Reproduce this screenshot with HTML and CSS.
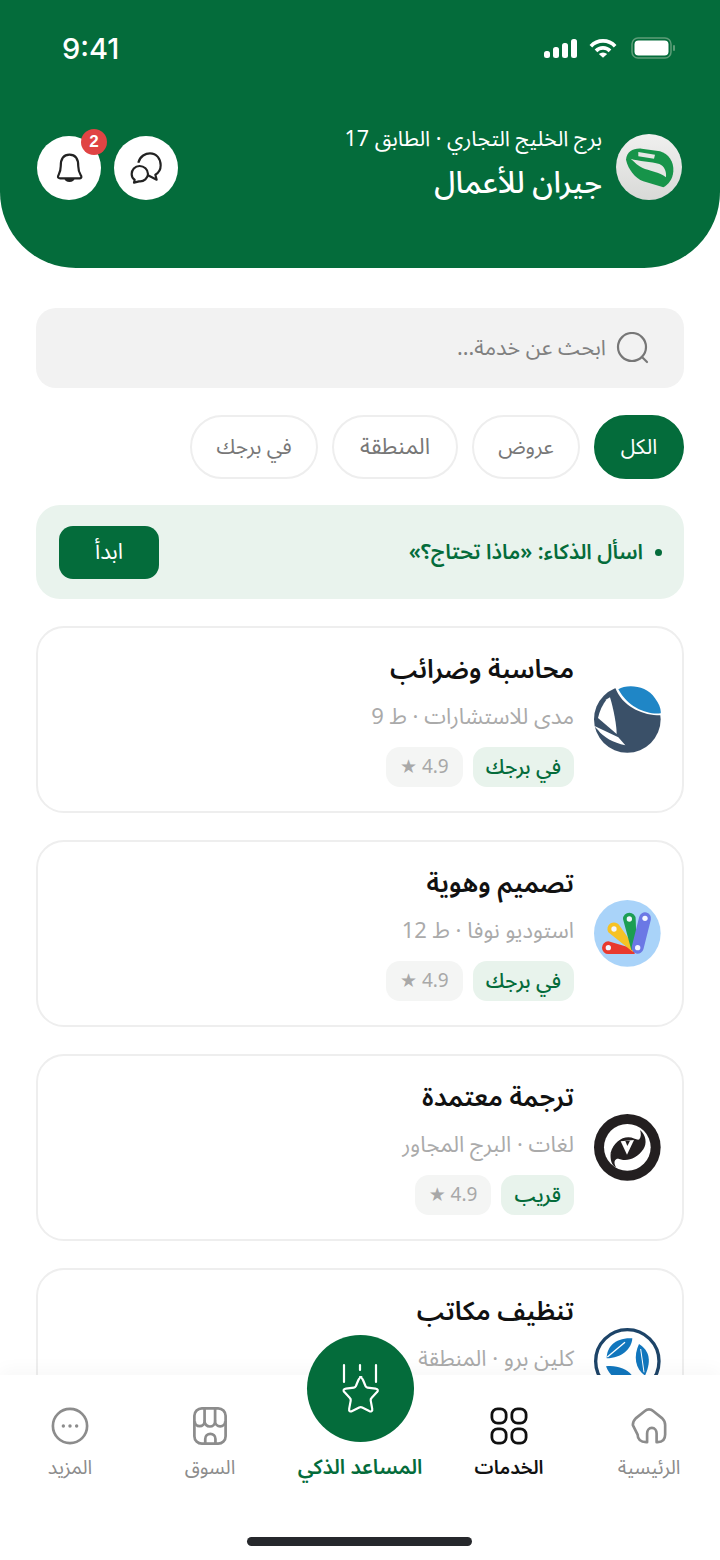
FILE: index.html
```html
<!DOCTYPE html>
<html lang="ar" dir="rtl">

<head>
    <meta charset="utf-8">
    <link rel="stylesheet" href="styles.css">
    <title>الخدمات</title>
</head>

<body>
    <div class="phone">
        <header class="top">
            <div class="status">
                <span class="time">9:41</span>
                <div class="status-icons">
                    <svg class="signal" width="33" height="19" viewBox="0 0 33 19"><rect x="0" y="12" width="6" height="7" rx="2.500" fill="#fff"/><rect x="9" y="8" width="6" height="11" rx="2.500" fill="#fff"/><rect x="18" y="4" width="6" height="15" rx="2.500" fill="#fff"/><rect x="27" y="0" width="6" height="19" rx="2.500" fill="#fff"/></svg>
                    <svg width="28" height="21" viewBox="0 0 30 22" fill="none" stroke="#fff" stroke-width="4"><path d="M2 8.500a18 18 0 0 1 26 0"/><path d="M7.500 13.500a10.500 10.500 0 0 1 15 0"/><path d="M15 21l-4.500-4a6.500 6.500 0 0 1 9 0z" fill="#fff" stroke="none"/></svg>
                    <svg width="44" height="22" viewBox="0 0 44 22"><rect x="1" y="1" width="39" height="20" rx="6" fill="none" stroke="#5d9d78" stroke-width="1.500"/><rect x="3.500" y="3.500" width="34" height="15" rx="4" fill="#fff"/><rect x="42" y="8" width="2" height="6" rx="1" fill="#5d9d78"/></svg>
                </div>
            </div>
            <div class="account">
                <svg class="account-logo" width="66" height="66" viewBox="18 18 198 198">
                    <defs><linearGradient id="grey" x1="0" y1="0" x2="0" y2="1"><stop offset="0" stop-color="#f0f0ef"/><stop offset="1" stop-color="#d8d9d7"/></linearGradient></defs>
                    <circle cx="117" cy="117" r="99" fill="url(#grey)"/>
                    <path d="M48 95C50 70 70 60 95 62L150 70C175 78 192 100 190 130 188 155 175 170 160 178L100 160C75 150 55 125 48 95Z" fill="#17944a"/>
                    <path d="M62 92C85 100 125 100 148 108 163 114 170 130 168 148 150 132 115 128 98 120 85 114 75 104 62 92Z" fill="#e6e7e5"/>
                    <path d="M85 72L135 80 132 92 85 85Z" fill="#e6e7e5"/>
                </svg>
                <div class="account-text">
                    <p class="account-place">برج الخليج التجاري · الطابق 17</p>
                    <h1 class="account-name">جيران للأعمال</h1>
                </div>
                <div class="top-actions">
                    <button class="round-btn">
                        <svg width="32" height="32" viewBox="298 80 96 96" fill="none" stroke="#222" stroke-width="6.500" stroke-linejoin="round"><path d="M323 112C328 92 345 84 358 84 378 84 390 100 390 120 390 133 384 143 374 148L378 163 352 150"/><path d="M327 122C312 122 303 134 303 146 303 153 306 160 312 163L310 172 325 168C340 170 352 158 352 146 352 132 340 122 327 122Z"/></svg>
                    </button>
                    <button class="round-btn">
                        <svg width="27" height="31" viewBox="76 80 80 92" fill="none" stroke="#222" stroke-width="6.500" stroke-linejoin="round"><path d="M116 88C96 88 90 105 90 122 90 138 84 146 82 152 81 156 84 158 88 158H146C150 158 152 156 151 152 148 146 142 138 142 122 142 105 136 88 116 88Z"/><path d="M104 158C106 168 126 168 128 158" fill="#222"/></svg>
                        <span class="badge">2</span>
                    </button>
                </div>
            </div>
        </header>

        <main class="content">
            <div class="search">
                <svg width="34" height="32" viewBox="0 0 34 32" fill="none" stroke="#777" stroke-width="2.200"><circle cx="16" cy="15" r="14"/><path d="M27 26l4 4" stroke-linecap="round"/></svg>
                <span>ابحث عن خدمة...</span>
            </div>

            <div class="chips">
                <span class="chip chip-on chip-all">الكل</span>
                <span class="chip chip-offers">عروض</span>
                <span class="chip chip-area">المنطقة</span>
                <span class="chip chip-tower">في برجك</span>
            </div>

            <div class="ask">
                <span class="ask-dot"></span>
                <span class="ask-text">اسأل الذكاء: «ماذا تحتاج؟»</span>
                <button class="ask-btn">ابدأ</button>
            </div>

            <article class="card">
                <svg class="card-logo" viewBox="12 18 201 201">
                    <circle cx="112" cy="118" r="100" fill="#3a5068"/>
                    <path d="M72 14L80 33C105 85 165 108 216 106L216 10Z" fill="#fff"/>
                    <path d="M85 28C110 12 170 15 195 55 208 72 214 90 212 100 175 105 115 85 85 28Z" fill="#1f86c6"/>
                    <path d="M50 58C38 74 28 94 24 114L80 162C80 135 70 85 60 52Z" fill="#fff"/>
                    <path d="M10 136L85 172 106 196C70 188 40 172 24 150Z" fill="#fff"/>
                </svg>
                <div class="card-body">
                    <h2 class="card-title">محاسبة وضرائب</h2>
                    <p class="card-sub">مدى للاستشارات · ط 9</p>
                    <div class="tags">
                        <span class="tag tag-green">في برجك</span>
                        <span class="tag tag-grey">★ 4.9</span>
                    </div>
                </div>
            </article>

            <article class="card">
                <svg class="card-logo" viewBox="12 15 201 201">
                    <circle cx="112" cy="115" r="100" fill="#a9d3f9"/>
                    <path d="M55 139A19 19 0 0 0 55 177H134V162Z" fill="#e9392e"/>
                    <path d="M55 112A19 19 0 0 1 89 92L136 160 128 170Z" fill="#f6c225"/>
                    <path d="M99 72A19 19 0 0 1 137 72L140 155 124 165Z" fill="#1c9e53"/>
                    <path d="M165 70L143 158" stroke="#6b78e5" stroke-width="36" stroke-linecap="round"/>
                    <g fill="#f4f6ff"><circle cx="55" cy="158" r="8"/><circle cx="72" cy="102" r="8"/><circle cx="118" cy="72" r="8"/><circle cx="165" cy="70" r="8"/><circle cx="143" cy="158" r="8"/></g>
                </svg>
                <div class="card-body">
                    <h2 class="card-title">تصميم وهوية</h2>
                    <p class="card-sub">استوديو نوفا · ط 12</p>
                    <div class="tags">
                        <span class="tag tag-green">في برجك</span>
                        <span class="tag tag-grey">★ 4.9</span>
                    </div>
                </div>
            </article>

            <article class="card">
                <svg class="card-logo" viewBox="12 12 201 201">
                    <circle cx="112" cy="112" r="100" fill="#231f20"/>
                    <circle cx="112" cy="112" r="70" fill="#fff"/>
                    <path d="M150 60C168 75 172 100 160 118 145 140 125 150 105 150 90 150 72 142 62 128 70 100 92 82 115 82 130 82 142 92 148 88 153 82 154 70 150 60Z" fill="#231f20"/>
                    <path d="M62 128C60 150 65 165 78 172 70 158 73 148 85 145Z" fill="#231f20"/>
                    <path d="M92 94L132 90 111 134Z" fill="#fff"/>
                    <path d="M106 93L120 92 112 108Z" fill="#231f20"/>
                </svg>
                <div class="card-body">
                    <h2 class="card-title">ترجمة معتمدة</h2>
                    <p class="card-sub">لغات · البرج المجاور</p>
                    <div class="tags">
                        <span class="tag tag-green">قريب</span>
                        <span class="tag tag-grey">★ 4.9</span>
                    </div>
                </div>
            </article>

            <article class="card">
                <svg class="card-logo" viewBox="12 27 201 201">
                    <circle cx="112" cy="127" r="95" fill="#fff" stroke="#1d4468" stroke-width="10"/>
                    <path d="M50 118C50 85 75 55 127 58 125 90 95 118 50 118Z" fill="#1176bd"/>
                    <path d="M52 114L105 70" stroke="#fff" stroke-width="4"/>
                    <path d="M147 75C170 90 190 115 165 170 135 150 130 110 147 75Z" fill="#1176bd"/>
                    <path d="M152 90L162 160" stroke="#fff" stroke-width="3"/>
                    <path d="M48 142C80 138 110 150 125 168 100 195 65 185 48 142Z" fill="#1176bd"/>
                </svg>
                <div class="card-body">
                    <h2 class="card-title">تنظيف مكاتب</h2>
                    <p class="card-sub">كلين برو · المنطقة</p>
                </div>
            </article>
        </main>

        <nav class="tabbar">
            <a class="tab">
                <svg width="38" height="38" viewBox="0 0 40 40" fill="none" stroke="#8c8c8c" stroke-width="2.800" stroke-linejoin="round"><path d="M3 19c0-3 1-5 3-7l10-8c2-2 6-2 8 0l10 8c2 2 3 4 3 7v10c0 5-3 8-8 8h-1V28c0-3-2-6-5-6s-5 3-5 6v9h-1c-6 0-9-3-9-8z"/></svg>
                <span>الرئيسية</span>
            </a>
            <a class="tab tab-on">
                <svg width="38" height="38" viewBox="0 0 40 40" fill="none" stroke="#111" stroke-width="2.900"><rect x="2" y="2" width="15" height="15" rx="6"/><rect x="23" y="2" width="15" height="15" rx="6"/><rect x="2" y="23" width="15" height="15" rx="6"/><rect x="23" y="23" width="15" height="15" rx="6"/></svg>
                <span>الخدمات</span>
            </a>
            <a class="tab tab-ai">
                <span class="fab">
                    <svg width="42" height="52" viewBox="0 0 42 52" fill="none" stroke="#fff" stroke-width="2.200" stroke-linejoin="round" stroke-linecap="round"><path d="M5 2v17M37 2v17M21 2v5"/><path d="M21 14c1.500 0 2 1 3 3l2.500 6c.500 1 1 1.500 2 1.600l8 1c2.500.300 3 2 1.500 3.500l-5.500 6c-.800.800-1 1.500-.800 2.500l1.500 8c.500 2.500-1.200 3.500-3 2.500l-7-3.500c-1-.500-2-.500-3 0l-7 3.500c-2 1-3.500 0-3-2.500l1.500-8c.200-1 0-1.700-.800-2.500l-5.500-6c-1.500-1.500-1-3.200 1.500-3.500l8-1c1-.100 1.500-.600 2-1.600l2.500-6c1-2 1.500-3 3-3z"/></svg>
                </span>
                <span>المساعد الذكي</span>
            </a>
            <a class="tab">
                <svg width="34" height="38" viewBox="40 20 100 112" fill="none" stroke="#8c8c8c" stroke-width="8" stroke-linejoin="round"><rect x="44" y="24" width="92" height="104" rx="22"/><path d="M45 62a14.500 14.500 0 0 0 29 0a15.500 15.500 0 0 0 31 0a15 15 0 0 0 30 0"/><path d="M74 24V62M105 24V62"/><path d="M76 128V114a15 15 0 0 1 30 0V128"/></svg>
                <span>السوق</span>
            </a>
            <a class="tab">
                <svg width="38" height="38" viewBox="0 0 40 40" fill="none" stroke="#8c8c8c" stroke-width="2.800"><circle cx="20" cy="20" r="18"/><g fill="#8c8c8c" stroke="none"><circle cx="13" cy="20" r="1.800"/><circle cx="20" cy="20" r="1.800"/><circle cx="27" cy="20" r="1.800"/></g></svg>
                <span>المزيد</span>
            </a>
        </nav>
        <div class="home-bar"></div>
    </div>
</body>

</html>
```

FILE: styles.css
```css
* {
    box-sizing: border-box;
}

html,
body {
    margin: 0;
    padding: 0;
}

body {
    font-family: "Noto Sans Arabic", "Noto Sans", "DejaVu Sans", sans-serif;
    background: #fff;
}

h1,
h2,
p {
    margin: 0;
    font-weight: normal;
}

.phone {
    position: relative;
    width: 720px;
    height: 1560px;
    overflow: hidden;
    background: #fff;
}

/* green header */
.top {
    height: 268px;
    padding: 31px 38px 0 37px;
    background: #046c3b;
    border-radius: 0 0 76px 76px;
    color: #fff;
}

.status {
    direction: ltr;
    display: flex;
    justify-content: space-between;
    align-items: center;
    padding: 0 7px 0 25px;
    height: 34px;
}

.time {
    font-family: Inter, sans-serif;
    font-size: 29px;
    font-weight: 500;
}

.status-icons {
    display: flex;
    align-items: center;
    gap: 14px;
}

.signal {
    margin-right: -2px;
}

.account {
    display: flex;
    align-items: center;
    margin-top: 62px;
}

.account-logo {
    flex: none;
    margin-left: 14px;
}

.account-text {
    flex: 1;
    margin-top: -3px;
}

.account-place {
    font-size: 21.5px;
    line-height: 30px;
}

.account-name {
    margin-top: 8px;
    font-size: 30px;
    font-weight: 500;
    line-height: 44px;
}

.top-actions {
    display: flex;
    gap: 13px;
    margin-top: 2px;
}

.round-btn {
    position: relative;
    display: flex;
    align-items: center;
    justify-content: center;
    width: 64px;
    height: 64px;
    padding: 0;
    border: 0;
    border-radius: 50%;
    background: #fff;
}

.badge {
    position: absolute;
    top: -7px;
    left: 44px;
    width: 26px;
    height: 26px;
    border-radius: 50%;
    background: #e04444;
    color: #fff;
    font-size: 17px;
    font-weight: 700;
    line-height: 26px;
    text-align: center;
}

/* content */
.content {
    padding: 40px 36px 0;
}

.search {
    display: flex;
    align-items: center;
    gap: 10px;
    height: 80px;
    padding: 0 34px;
    border-radius: 20px;
    background: #f2f2f2;
    color: #808080;
    font-size: 21.5px;
}

.chips {
    display: flex;
    gap: 14px;
    margin-top: 27px;
}

.chip {
    display: flex;
    align-items: center;
    justify-content: center;
    height: 64px;
    border: 2px solid #eeeeee;
    border-radius: 32px;
    color: #777;
    font-size: 21px;
}

.chip-all {
    width: 90px;
}

.chip-offers {
    width: 108px;
}

.chip-area {
    width: 126px;
    font-size: 22.5px;
}

.chip-tower {
    width: 128px;
}

.chip-on {
    border-color: #046c3b;
    background: #046c3b;
    color: #fff;
}

.ask {
    display: flex;
    align-items: center;
    height: 94px;
    margin-top: 26px;
    padding: 0 22px 0 25px;
    border-radius: 24px;
    background: #e9f3ed;
    color: #046c3b;
}

.ask-dot {
    width: 7px;
    height: 7px;
    margin-left: 12px;
    border-radius: 50%;
    background: #046c3b;
}

.ask-text {
    flex: 1;
    font-size: 21px;
    font-weight: 600;
}

.ask-btn {
    width: 100px;
    height: 53px;
    margin-left: -2px;
    padding: 0;
    border: 0;
    border-radius: 14px;
    background: #046c3b;
    color: #fff;
    font-family: inherit;
    font-size: 22px;
}

.card {
    display: flex;
    align-items: flex-start;
    gap: 20px;
    height: 187px;
    margin-top: 27px;
    padding: 22px 21px 0;
    border: 2px solid #eeeeee;
    border-radius: 28px;
    background: #fff;
}

.card-logo {
    flex: none;
    width: 67px;
    height: 67px;
    margin-top: 36px;
}

.card-title {
    color: #111;
    font-size: 26px;
    font-weight: 600;
    line-height: 40px;
}

.card-sub {
    margin-top: 12px;
    color: #aaaaaa;
    font-size: 22px;
    line-height: 30px;
}

.tags {
    display: flex;
    gap: 10px;
    margin-top: 15px;
}

.tag {
    display: flex;
    align-items: center;
    height: 40px;
    padding: 0 14px;
    border-radius: 14px;
}

.tag-green {
    padding: 0 13px;
    background: #e8f3ec;
    color: #046c3b;
    font-size: 20.5px;
    font-weight: 500;
}

.tag-grey {
    direction: ltr;
    background: #f4f5f4;
    color: #a8a8a8;
    font-size: 19px;
}

/* bottom bar */
.tabbar {
    position: absolute;
    left: 0;
    right: 0;
    top: 1375px;
    height: 185px;
    display: grid;
    grid-template-columns: 142px 138px 160px 140px 140px;
    background: #fff;
    box-shadow: 0 -6px 16px rgba(0, 0, 0, 0.03);
}

.tab {
    display: flex;
    flex-direction: column;
    align-items: center;
    padding-top: 32px;
    color: #8c8c8c;
    font-size: 19.5px;
    white-space: nowrap;
}

.tab>span:last-child {
    margin-top: 8px;
    line-height: 30px;
}

.tab-on {
    color: #111;
    font-size: 19px;
    font-weight: 600;
}

.tab-ai {
    padding-top: 0;
    color: #046c3b;
    font-size: 20.5px;
    font-weight: 600;
}

.tab-ai>span:last-child {
    margin-top: 11px;
}

.fab {
    display: flex;
    align-items: center;
    justify-content: center;
    flex: none;
    width: 107px;
    height: 107px;
    margin-top: -40px;
    border-radius: 50%;
    background: #046c3b;
}

.home-bar {
    position: absolute;
    left: 247px;
    top: 1537px;
    width: 225px;
    height: 9px;
    border-radius: 5px;
    background: #26282c;
}
```
